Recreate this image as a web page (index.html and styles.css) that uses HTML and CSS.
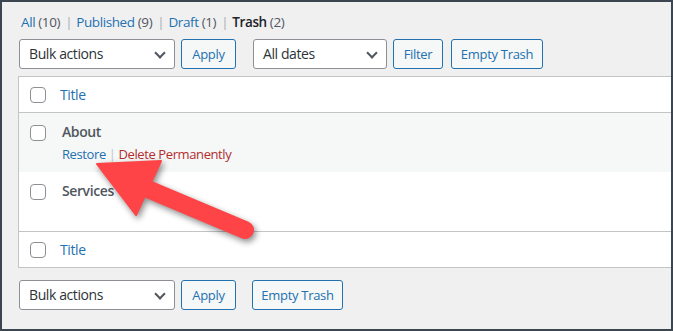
FILE: index.html
```html
<!DOCTYPE html>
<html lang="en">
<head>
    <meta charset="UTF-8">
    <title>Pages - Trash</title>
    <link rel="stylesheet" href="styles.css">
</head>
<body>
    <div class="frame">
        <ul class="subsubsub">
            <li><a href="#">All <span class="count">(10)</span></a> <span class="sep">|</span></li>
            <li><a href="#">Published <span class="count">(9)</span></a> <span class="sep">|</span></li>
            <li><a href="#">Draft <span class="count">(1)</span></a> <span class="sep">|</span></li>
            <li><a href="#" class="current">Trash <span class="count">(2)</span></a></li>
        </ul>

        <div class="tablenav top">
            <div class="select bulk">Bulk actions <span class="chev"></span></div>
            <button class="btn apply">Apply</button>
            <div class="select dates">All dates <span class="chev"></span></div>
            <button class="btn filter">Filter</button>
            <button class="btn empty">Empty Trash</button>
        </div>

        <div class="list-table">
            <div class="row head">
                <div class="cb"><span class="box"></span></div>
                <div class="col-title"><a href="#">Title</a></div>
            </div>
            <div class="row item alt">
                <div class="cb"><span class="box"></span></div>
                <div class="col-title">
                    <strong>About</strong>
                    <div class="row-actions">
                        <a href="#">Restore</a><span class="bar">|</span><a href="#" class="delete">Delete Permanently</a>
                    </div>
                </div>
            </div>
            <div class="row item">
                <div class="cb"><span class="box"></span></div>
                <div class="col-title"><strong>Services</strong></div>
            </div>
            <div class="row foot">
                <div class="cb"><span class="box"></span></div>
                <div class="col-title"><a href="#">Title</a></div>
            </div>
        </div>

        <div class="tablenav bottom">
            <div class="select bulk">Bulk actions <span class="chev"></span></div>
            <button class="btn apply">Apply</button>
            <button class="btn trash-bottom">Empty Trash</button>
        </div>

        <!-- annotation arrow -->
        <svg class="arrow" width="673" height="331" viewBox="0 0 673 331">
            <g fill="#ff4447" stroke="#ff4447">
                <line x1="150" y1="190" x2="245" y2="230" stroke-width="18" stroke-linecap="round"/>
                <polygon points="97,164 161,161 136,215" stroke-width="2" stroke-linejoin="round"/>
            </g>
        </svg>
    </div>
</body>
</html>
```

FILE: styles.css
```css
body {
    margin: 0;
    font-family: "Open Sans", "Noto Sans", sans-serif;
    font-size: 13px;
    letter-spacing: -0.4px;
    color: #3c434a;
}

.frame {
    position: relative;
    box-sizing: border-box;
    width: 673px;
    height: 331px;
    border: 2px solid #3c4650;
    background: #f0f0f1;
    padding: 10px 0 0 16px;
    overflow: hidden;
}

a {
    color: #2271b1;
    text-decoration: none;
}

/* Status links */
.subsubsub {
    list-style: none;
    margin: 0;
    padding: 0 0 0 3px;
    display: flex;
    line-height: 20px;
    font-size: 13.5px;
    color: #646970;
}

.subsubsub li {
    margin-right: 4px;
}

.subsubsub .count {
    color: #50575e;
}

.subsubsub .sep {
    color: #a7aaad;
    margin-left: 2px;
}

.subsubsub .current {
    color: #1d2327;
    font-weight: 600;
}

.subsubsub .current .count {
    font-weight: 400;
}

/* Controls */
.tablenav {
    display: flex;
    gap: 6px;
    margin-left: 1px;
    height: 30px;
}

.tablenav.top {
    margin-top: 7px;
}

.tablenav.bottom {
    margin-top: 12px;
}

.select {
    box-sizing: border-box;
    height: 30px;
    border: 1px solid #8c8f94;
    border-radius: 3px;
    background: #fff;
    color: #2c3338;
    padding: 0 0 0 9px;
    line-height: 28px;
    font-size: 14px;
    position: relative;
}

.select.bulk {
    width: 156px;
}

.select.dates {
    width: 134px;
    margin-left: 11px;
}

.chev {
    position: absolute;
    right: 10px;
    top: 9px;
    width: 6px;
    height: 6px;
    border-right: 2px solid #50575e;
    border-bottom: 2px solid #50575e;
    transform: rotate(45deg);
}

.btn {
    box-sizing: border-box;
    height: 30px;
    padding: 0;
    border: 1px solid #2271b1;
    border-radius: 3px;
    background: #f6f7f7;
    color: #2271b1;
    font-family: inherit;
    font-size: 13px;
    letter-spacing: -0.3px;
    white-space: nowrap;
}

.btn.apply {
    width: 55px;
}

.btn.filter {
    width: 50px;
}

.btn.empty {
    width: 92px;
    margin-left: 2px;
}

.btn.trash-bottom {
    width: 91px;
    margin-left: 10px;
}

/* Table */
.list-table {
    margin-top: 7px;
    border: 1px solid #c3c4c7;
    border-right: none;
    background: #fff;
}

.row {
    display: flex;
}

.cb {
    width: 41px;
    padding-left: 11px;
    box-sizing: border-box;
    flex-shrink: 0;
}

.box {
    display: block;
    box-sizing: border-box;
    width: 16px;
    height: 16px;
    border: 1px solid #8c8f94;
    border-radius: 4px;
    background: #fff;
}

.row.head,
.row.foot {
    height: 36px;
    padding-top: 10px;
    box-sizing: border-box;
    line-height: 16px;
    font-size: 14px;
}

.row.head {
    border-bottom: 1px solid #c3c4c7;
}

.row.foot {
    border-top: 1px solid #c3c4c7;
}

.row.item {
    height: 59px;
    box-sizing: border-box;
    padding-top: 12px;
}

.row.alt {
    background: #f6f7f7;
}

.item .col-title {
    padding-left: 2px;
    margin-top: -4px;
}

.item strong {
    display: block;
    color: #50575e;
    font-size: 14px;
    font-weight: 600;
    line-height: 22px;
}

.row-actions {
    margin-top: 2px;
    line-height: 18px;
}

.row-actions .bar {
    color: #c3c4c7;
    margin: 0 3px;
}

.row-actions .delete {
    color: #b32d2e;
}

/* Arrow overlay */
.arrow {
    position: absolute;
    left: -2px;
    top: -2px;
    filter: drop-shadow(2px 3px 3px rgba(0, 0, 0, 0.45));
    pointer-events: none;
}
```
